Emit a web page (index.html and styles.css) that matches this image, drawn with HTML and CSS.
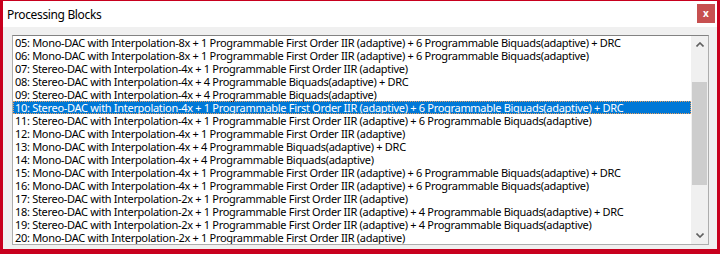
FILE: index.html
```html
<!DOCTYPE html>
<html lang="en">
<head>
    <meta charset="UTF-8">
    <meta name="viewport" content="width=device-width, initial-scale=1.0">
    <title>Processing Blocks</title>
    <link rel="stylesheet" href="styles.css">
</head>
<body>
    <div class="window">
        <div class="titlebar">
            <span class="title">Processing Blocks</span>
            <div class="close_btn">x</div>
        </div>

        <div class="content">
            <div class="listbox">
                <div class="list">
                    <div class="row">05: Mono-DAC with Interpolation-8x + 1 Programmable First Order IIR (adaptive) + 6 Programmable Biquads(adaptive) + DRC</div>
                    <div class="row">06: Mono-DAC with Interpolation-8x + 1 Programmable First Order IIR (adaptive) + 6 Programmable Biquads(adaptive)</div>
                    <div class="row">07: Stereo-DAC with Interpolation-4x + 1 Programmable First Order IIR (adaptive)</div>
                    <div class="row">08: Stereo-DAC with Interpolation-4x + 4 Programmable Biquads(adaptive) + DRC</div>
                    <div class="row">09: Stereo-DAC with Interpolation-4x + 4 Programmable Biquads(adaptive)</div>
                    <div class="row selected">10: Stereo-DAC with Interpolation-4x + 1 Programmable First Order IIR (adaptive) + 6 Programmable Biquads(adaptive) + DRC</div>
                    <div class="row">11: Stereo-DAC with Interpolation-4x + 1 Programmable First Order IIR (adaptive) + 6 Programmable Biquads(adaptive)</div>
                    <div class="row">12: Mono-DAC with Interpolation-4x + 1 Programmable First Order IIR (adaptive)</div>
                    <div class="row">13: Mono-DAC with Interpolation-4x + 4 Programmable Biquads(adaptive) + DRC</div>
                    <div class="row">14: Mono-DAC with Interpolation-4x + 4 Programmable Biquads(adaptive)</div>
                    <div class="row">15: Mono-DAC with Interpolation-4x + 1 Programmable First Order IIR (adaptive) + 6 Programmable Biquads(adaptive) + DRC</div>
                    <div class="row">16: Mono-DAC with Interpolation-4x + 1 Programmable First Order IIR (adaptive) + 6 Programmable Biquads(adaptive)</div>
                    <div class="row">17: Stereo-DAC with Interpolation-2x + 1 Programmable First Order IIR (adaptive)</div>
                    <div class="row">18: Stereo-DAC with Interpolation-2x + 1 Programmable First Order IIR (adaptive) + 4 Programmable Biquads(adaptive) + DRC</div>
                    <div class="row">19: Stereo-DAC with Interpolation-2x + 1 Programmable First Order IIR (adaptive) + 4 Programmable Biquads(adaptive)</div>
                    <div class="row">20: Mono-DAC with Interpolation-2x + 1 Programmable First Order IIR (adaptive)</div>
                </div>

                <div class="scrollbar">
                    <div class="arrow">
                        <svg width="8" height="5" viewBox="0 0 8 5"><path d="M0.5 4.5 L4 1 L7.5 4.5" fill="none" stroke="#606060" stroke-width="1.6"/></svg>
                    </div>
                    <div class="track">
                        <div class="thumb"></div>
                    </div>
                    <div class="arrow">
                        <svg width="8" height="5" viewBox="0 0 8 5"><path d="M0.5 0.5 L4 4 L7.5 0.5" fill="none" stroke="#606060" stroke-width="1.6"/></svg>
                    </div>
                </div>
            </div>
        </div>
    </div>
</body>
</html>
```

FILE: styles.css
```css
body {
    margin: 0;
    font-family: "Noto Sans", "Liberation Sans", sans-serif;
}
.window {
    width: 720px;
    height: 254px;
    box-sizing: border-box;
    border: 3px solid #c8001e;
    border-top-width: 1px;
    border-bottom-width: 5px;
    background-color: #f0f0f0;
    display: flex;
    flex-direction: column;
}
.titlebar {
    height: 26px;
    background-color: #fff;
    display: flex;
    align-items: center;
    justify-content: space-between;
    padding-left: 4px;
    padding-right: 2px;
    flex-shrink: 0;
}
.title {
    font-size: 12px;
    letter-spacing: -0.35px;
    color: #000;
}
.close_btn {
    width: 18px;
    height: 19px;
    background-color: #c75050;
    color: #fff;
    font-size: 10px;
    font-weight: bold;
    line-height: 18px;
    text-align: center;
    align-self: flex-start;
    margin-top: 3px;
}
.content {
    flex: 1;
    display: flex;
    padding: 8px 8px 4px 9px;
    min-height: 0;
}
.listbox {
    flex: 1;
    display: flex;
    border: 1px solid #adadad;
    border-top-color: #828282;
    background-color: #fff;
    min-width: 0;
}
.list {
    flex: 1;
    overflow: hidden;
    min-width: 0;
}
.row {
    height: 13px;
    line-height: 13px;
    font-size: 11px;
    letter-spacing: -0.3px;
    padding-left: 2px;
    white-space: nowrap;
    color: #000;
}
.row.selected {
    background-color: #0078d7;
    color: #fff;
    outline: 1px dotted #e8a060;
    outline-offset: -1px;
}
.scrollbar {
    width: 17px;
    display: flex;
    flex-direction: column;
    background-color: #f0f0f0;
}
.arrow {
    height: 17px;
    display: flex;
    align-items: center;
    justify-content: center;
}
.track {
    flex: 1;
    padding-top: 29px;
}
.thumb {
    height: 103px;
    margin: 0 1px;
    background-color: #cdcdcd;
}
```
